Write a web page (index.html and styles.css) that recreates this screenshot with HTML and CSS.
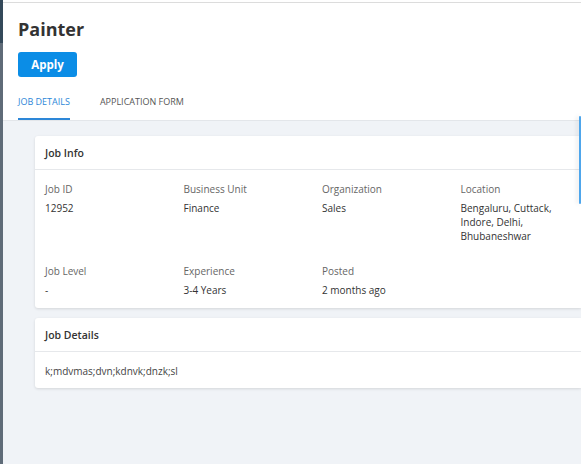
FILE: index.html
```html
<!DOCTYPE html>
<html>
<head>
<meta charset="utf-8">
<link rel="stylesheet" href="styles.css">
</head>
<body>
<div class="app">
  <div class="rail"><div class="rail-top"></div></div>
  <div class="main">
    <header class="head">
      <h1 class="title">Painter</h1>
      <button class="apply">Apply</button>
      <nav class="tabs">
        <span class="tab active">JOB DETAILS</span>
        <span class="tab">APPLICATION FORM</span>
      </nav>
    </header>
    <section class="content">
      <div class="card">
        <div class="card-head">Job Info</div>
        <div class="card-body grid">
          <div class="field"><div class="label">Job ID</div><div class="value">12952</div></div>
          <div class="field"><div class="label">Business Unit</div><div class="value">Finance</div></div>
          <div class="field"><div class="label">Organization</div><div class="value">Sales</div></div>
          <div class="field"><div class="label">Location</div><div class="value narrow">Bengaluru, Cuttack, Indore, Delhi, Bhubaneshwar</div></div>
          <div class="field"><div class="label">Job Level</div><div class="value">-</div></div>
          <div class="field"><div class="label">Experience</div><div class="value">3-4 Years</div></div>
          <div class="field"><div class="label">Posted</div><div class="value">2 months ago</div></div>
        </div>
      </div>
      <div class="card">
        <div class="card-head">Job Details</div>
        <div class="card-body text">k;mdvmas;dvn;kdnvk;dnzk;sl</div>
      </div>
      <div class="scroll-thumb"></div>
    </section>
  </div>
</div>
</body>
</html>
```
FILE: styles.css
```css
html, body {
  margin: 0;
  padding: 0;
  height: 100%;
  overflow: hidden;
  background: #fff;
  font-family: "Open Sans", "Noto Sans", sans-serif;
}
.app {
  display: flex;
  height: 464px;
}
.rail {
  width: 3px;
  flex: none;
  background: #5f6b78;
}
.rail-top {
  height: 43px;
  background: #34495a;
}
.main {
  flex: 1;
  display: flex;
  flex-direction: column;
  min-width: 0;
}
.head {
  margin-top: 2px;
  border-top: 1px solid #dcdcdc;
  border-bottom: 1px solid #e3e6ea;
  padding-left: 15px;
  background: #fff;
}
.title {
  margin: 14px 0 0;
  font-size: 18px;
  line-height: 24px;
  font-weight: 700;
  color: #333;
}
.apply {
  display: block;
  margin-top: 11px;
  width: 59px;
  height: 25px;
  border: none;
  border-radius: 3px;
  background: #0b8de6;
  color: #fff;
  font-family: inherit;
  font-size: 11.5px;
  font-weight: 700;
  padding: 0;
}
.tabs {
  display: flex;
  gap: 30px;
  margin-top: 18px;
}
.tab {
  font-size: 9px;
  color: #555;
  line-height: 14px;
  padding-bottom: 9px;
}
.tab.active {
  color: #2d87d8;
  border-bottom: 2px solid #2d87d8;
}
.content {
  flex: 1;
  background: #f0f3f7;
  padding: 15px 0 0 32px;
  position: relative;
}
.card {
  background: #fff;
  border-radius: 3px 0 0 3px;
  box-shadow: 0 1px 3px rgba(0,0,0,0.12);
  margin-bottom: 10px;
}
.card-head {
  height: 34px;
  line-height: 34px;
  padding-left: 10px;
  font-size: 10.5px;
  font-weight: 600;
  color: #333;
  border-bottom: 1px solid #e6e8eb;
  box-sizing: border-box;
}
.card-body {
  padding: 12px 10px 10px;
  font-size: 10px;
  color: #333;
}
.grid {
  display: grid;
  grid-template-columns: repeat(4, 138.5px);
  row-gap: 21px;
  padding-bottom: 11px;
}
.label {
  color: #666;
  line-height: 14px;
}
.value {
  margin-top: 5px;
  line-height: 14px;
}
.narrow {
  width: 115px;
}
.text {
  line-height: 14px;
  color: #444;
}
.scroll-thumb {
  position: absolute;
  right: 0;
  top: -5px;
  width: 2px;
  height: 88px;
  background: #4ea6ec;
  box-shadow: -2px 0 4px rgba(0,0,0,0.12);
  border-radius: 1px;
}
```
